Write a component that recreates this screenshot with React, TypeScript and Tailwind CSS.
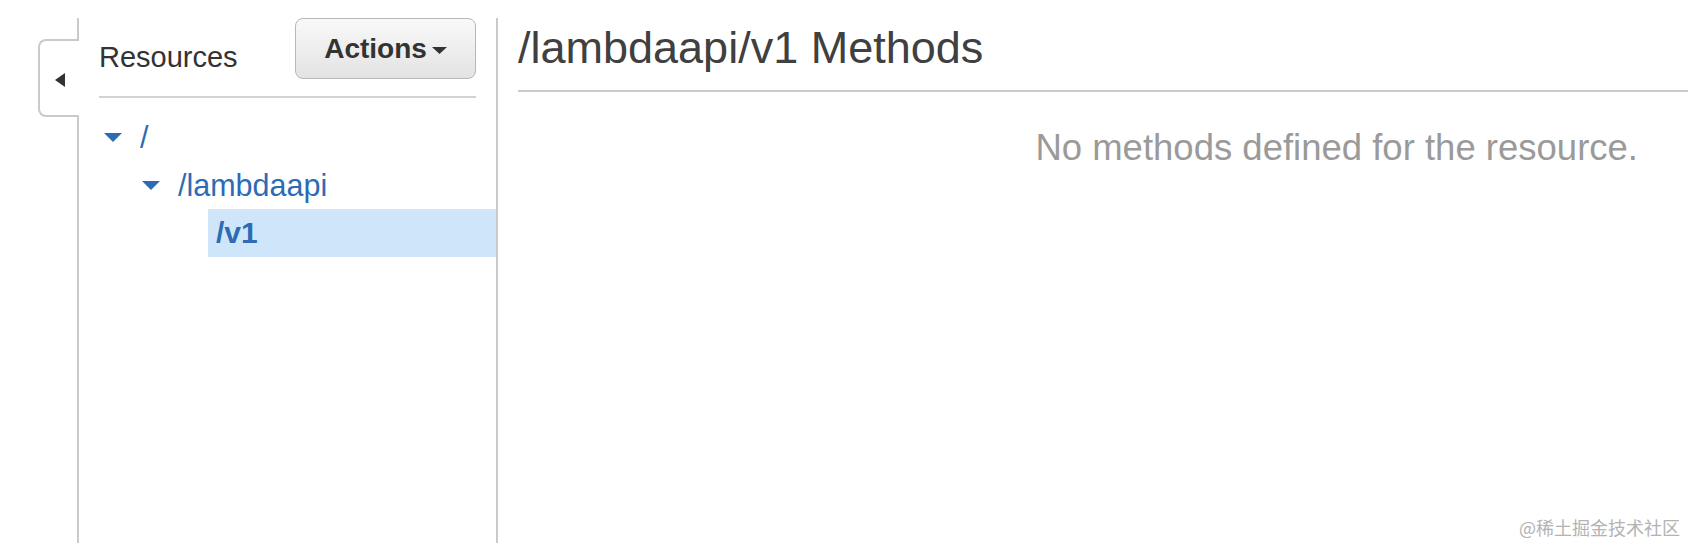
import React from 'react'

function Caret({ className }: { className?: string }): JSX.Element {
  return (
    <svg className={className} viewBox="0 0 18 9" width="18" height="9">
      <polygon points="0,0 18,0 9,9" fill="currentColor" />
    </svg>
  )
}

function TreeRow({
  label,
  indent,
  open,
}: {
  label: string
  indent: string
  open?: boolean
}): JSX.Element {
  return (
    <div className={`flex h-[48px] items-center ${indent}`}>
      {open && <Caret className="mr-[18px] text-[#2d6bb4]" />}
      <span className="text-[30.5px] leading-[48px] text-[#2d6bb4]">{label}</span>
    </div>
  )
}

export default function App(): JSX.Element {
  return (
    <div className="relative flex h-[543px] w-full overflow-hidden bg-white pt-[18px] font-['Liberation_Sans',Arial,sans-serif]">
      {/* collapse tab */}
      <div className="flex w-[77px] shrink-0 justify-end pt-[21px]">
        <div className="relative z-10 -mr-[2px] flex h-[78px] w-[41px] items-center justify-center rounded-l-[8px] border-y-2 border-l-2 border-[#cacaca] bg-white">
          <svg viewBox="0 0 10 14" width="10" height="14" className="mt-[3px] text-[#333]">
            <polygon points="10,0 10,14 0,7" fill="currentColor" />
          </svg>
        </div>
      </div>

      {/* resources sidebar */}
      <aside className="flex w-[421px] shrink-0 flex-col border-x-2 border-[#cacaca]">
        <div className="px-5">
          <div className="flex h-[61px] items-end justify-between">
            <h2 className="mb-[7px] text-[29px] leading-[29px] text-[#333]">Resources</h2>
            <button className="flex h-[61px] w-[181px] items-center justify-center gap-[5px] rounded-[8px] border border-[#b8b8b8] bg-linear-to-b from-[#f9f9f9] to-[#e3e3e3] text-[28px] font-bold text-[#333]">
              <span className="leading-[28px]">Actions</span>
              <svg viewBox="0 0 15 7" width="15" height="7" className="mt-[3px]">
                <polygon points="0,0 15,0 7.5,7" fill="#333" />
              </svg>
            </button>
          </div>
          <div className="mt-[17px] border-t-2 border-[#d2d2d2]" />
        </div>

        <div className="mt-[15px]">
          <TreeRow label="/" indent="pl-[25px]" open />
          <TreeRow label="/lambdaapi" indent="pl-[63px]" open />
          <div className="ml-[129px] flex h-[48px] items-center bg-[#cfe6fa] pl-[8px]">
            <span className="text-[30px] font-bold leading-[48px] text-[#2d6bb4]">/v1</span>
          </div>
        </div>
      </aside>

      {/* methods panel */}
      <main className="flex min-w-0 flex-1 flex-col pl-5">
        <h1 className="mt-[7px] text-[45px] leading-[45px] text-[#404040]">/lambdaapi/v1 Methods</h1>
        <div className="mt-[20px] border-t-2 border-[#cacaca]" />
        <p className="mt-[38px] pr-[50px] text-right text-[36.5px] leading-[36px] text-[#9a9a9a]">
          No methods defined for the resource.
        </p>
      </main>

      <span className="absolute right-[8px] bottom-[7px] font-['Noto_Sans_CJK_SC',sans-serif] text-[18px] leading-[18px] text-[#b3b3b3]">
        @稀土掘金技术社区
      </span>
    </div>
  )
}
